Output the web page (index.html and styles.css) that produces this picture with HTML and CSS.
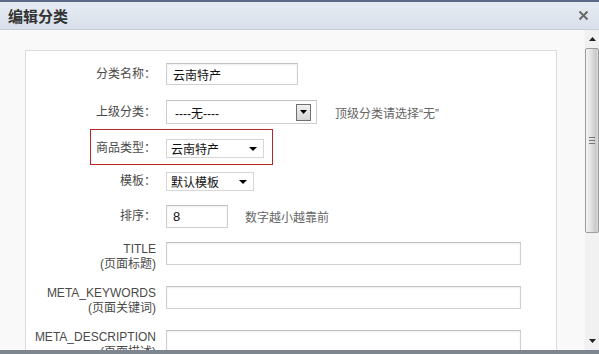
FILE: index.html
```html
<!DOCTYPE html>
<html lang="zh-CN">
  <head>
    <meta charset="UTF-8" />
    <title>编辑分类</title>
    <link rel="stylesheet" href="styles.css">
  </head>
  <body>
    <div class="dialog">
      <div class="dialog-head">
        <span class="dialog-title">编辑分类</span>
        <span class="close">
          <svg width="11" height="11" viewBox="0 0 11 11"><path d="M1.5 1.5 L9.5 9.5 M9.5 1.5 L1.5 9.5" stroke="#6a6a6a" stroke-width="2"/></svg>
        </span>
      </div>
      <div class="dialog-body">
        <div class="main">
          <div class="panel">
            <div class="row r1">
              <label>分类名称：</label>
              <div class="field"><input class="txt w-name" type="text" value="云南特产" /></div>
            </div>
            <div class="row r2">
              <label>上级分类：</label>
              <div class="field">
                <div class="win-select">
                  <span>----无----</span>
                  <span class="win-btn"><svg width="7" height="4" viewBox="0 0 7 4"><path d="M0 0 H7 L3.5 4 Z" fill="#000"/></svg></span>
                </div>
                <span class="hint hint-parent">顶级分类请选择“无”</span>
              </div>
            </div>
            <div class="row hl">
              <label>商品类型：</label>
              <div class="field">
                <div class="flat-select w-type">
                  <span>云南特产</span>
                  <svg width="8" height="4" viewBox="0 0 8 4"><path d="M0 0 H8 L4 4 Z" fill="#000"/></svg>
                </div>
              </div>
            </div>
            <div class="row r4">
              <label>模板：</label>
              <div class="field">
                <div class="flat-select w-tpl">
                  <span>默认模板</span>
                  <svg width="8" height="4" viewBox="0 0 8 4"><path d="M0 0 H8 L4 4 Z" fill="#000"/></svg>
                </div>
              </div>
            </div>
            <div class="row r5">
              <label>排序：</label>
              <div class="field">
                <input class="txt w-sort" type="text" value="8" />
                <span class="hint hint-sort">数字越小越靠前</span>
              </div>
            </div>
            <div class="row top r6">
              <label>TITLE<br>(页面标题)</label>
              <div class="field"><input class="txt w-long" type="text" /></div>
            </div>
            <div class="row top r6">
              <label>META_KEYWORDS<br>(页面关键词)</label>
              <div class="field"><input class="txt w-long" type="text" /></div>
            </div>
            <div class="row top r6">
              <label>META_DESCRIPTION<br>(页面描述)</label>
              <div class="field"><input class="txt w-long" type="text" /></div>
            </div>
          </div>
        </div>
        <div class="scrollbar">
          <span class="sb-arrow">
            <svg width="7" height="4" viewBox="0 0 7 4"><path d="M0 4 H7 L3.5 0 Z" fill="#222"/></svg>
          </span>
          <div class="sb-thumb">
            <span class="grip"></span>
          </div>
          <span class="sb-space"></span>
          <span class="sb-arrow">
            <svg width="7" height="4" viewBox="0 0 7 4"><path d="M0 0 H7 L3.5 4 Z" fill="#222"/></svg>
          </span>
        </div>
      </div>
      <div class="dialog-foot"></div>
    </div>
  </body>
</html>
```

FILE: styles.css
```css
body {
  margin: 0;
  font-family: "Liberation Sans", "Noto Sans CJK SC", sans-serif;
  font-size: 12px;
  color: #333;
  background-color: #f9f9f9;
}

.dialog {
  width: 599px;
  height: 354px;
  display: flex;
  flex-direction: column;
  overflow: hidden;
  border-top: 2px solid #5b6987;
  box-sizing: border-box;
}

.dialog-head {
  height: 27px;
  flex: none;
  display: flex;
  align-items: center;
  justify-content: space-between;
  padding: 0 10px 0 8px;
  background: linear-gradient(#e6ebf2, #d9e0ea);
  border-bottom: 1px solid #c6cdd8;
}

.dialog-title {
  font-family: "Noto Sans CJK SC", sans-serif;
  font-size: 15px;
  font-weight: bold;
  color: #333;
  letter-spacing: 0;
}

.close {
  display: flex;
  margin-right: 0;
}

.dialog-body {
  flex: 1;
  display: flex;
  min-height: 0;
}

.main {
  flex: 1;
  padding: 20px 27px 0 25px;
  background-color: #f9f9f9;
  overflow: hidden;
}

.panel {
  height: 100%;
  padding-top: 12px;
  background-color: #fff;
  border: 1px solid #dcdcdc;
  border-bottom: none;
  box-sizing: border-box;
}

.row {
  display: grid;
  grid-template-columns: 130px auto;
  column-gap: 10px;
  align-items: center;
}

.row label {
  text-align: right;
  color: #4a4a4a;
  line-height: 15px;
}

.row.top {
  align-items: start;
}

.r2 { margin-top: 15px; }
.r4 { margin-top: 7px; }
.r5 { margin-top: 14px; }
.r6 { margin-top: 14px; }

.row.hl {
  margin-top: 5px;
  margin-left: 64px;
  width: 183px;
  grid-template-columns: 65px auto;
  padding: 9px 0 6px;
  border: 1px solid #b5262b;
  box-sizing: border-box;
}

.field {
  display: flex;
  align-items: center;
}

.txt {
  height: 23px;
  box-sizing: border-box;
  margin: 0;
  padding: 0 6px;
  border: 1px solid #cfcfcf;
  border-top-color: #c2c2c2;
  box-shadow: inset 0 1px 2px #ececec;
  font-family: "Noto Sans CJK SC", sans-serif;
  font-size: 12px;
  color: #111;
  background: #fff;
}

.w-name { width: 132px; height: 22px; }
.w-sort { width: 62px; font-family: "Liberation Sans", sans-serif; font-size: 13px; }
.w-long { width: 355px; }

.win-select {
  width: 151px;
  height: 24px;
  box-sizing: border-box;
  display: flex;
  align-items: center;
  justify-content: space-between;
  padding: 0 5px 0 8px;
  border: 1px solid #cfcfcf;
  border-top-color: #c0c0c0;
  color: #111;
}

.win-btn {
  width: 15px;
  height: 17px;
  box-sizing: border-box;
  display: flex;
  align-items: center;
  justify-content: center;
  border: 1px solid #707070;
  background: linear-gradient(#f0f0f0, #d6d6d6);
}

.hint {
  color: #666;
}

.hint-parent { margin-left: 18px; }
.hint-sort { margin-left: 17px; }

.flat-select {
  height: 19px;
  box-sizing: border-box;
  display: flex;
  align-items: center;
  justify-content: space-between;
  padding: 0 6px 0 4px;
  border: 1px solid #d6d6d6;
  background: #fff;
  color: #111;
}

.w-type { width: 98px; }
.w-tpl { width: 88px; }

.scrollbar {
  width: 14px;
  flex: none;
  display: flex;
  flex-direction: column;
  align-items: center;
  background-color: #f1f1f1;
  border-left: 1px solid #f7f7f7;
}

.sb-arrow {
  height: 18px;
  display: flex;
  align-items: center;
  justify-content: center;
}

.sb-thumb {
  width: 14px;
  height: 185px;
  box-sizing: border-box;
  display: flex;
  align-items: center;
  justify-content: center;
  border: 1px solid #9c9c9c;
  border-radius: 2px;
  background: linear-gradient(to right, #f4f4f4, #e0e0e0 45%, #c9c9c9 80%, #dcdcdc);
}

.grip {
  width: 6px;
  height: 5px;
  border-top: 1px solid #777;
  border-bottom: 1px solid #777;
  position: relative;
}

.grip::after {
  content: "";
  position: absolute;
  left: 0;
  right: 0;
  top: 2px;
  border-top: 1px solid #777;
}

.sb-space {
  flex: 1;
}

.dialog-foot {
  height: 4px;
  flex: none;
  background-color: #7d858f;
}
```
